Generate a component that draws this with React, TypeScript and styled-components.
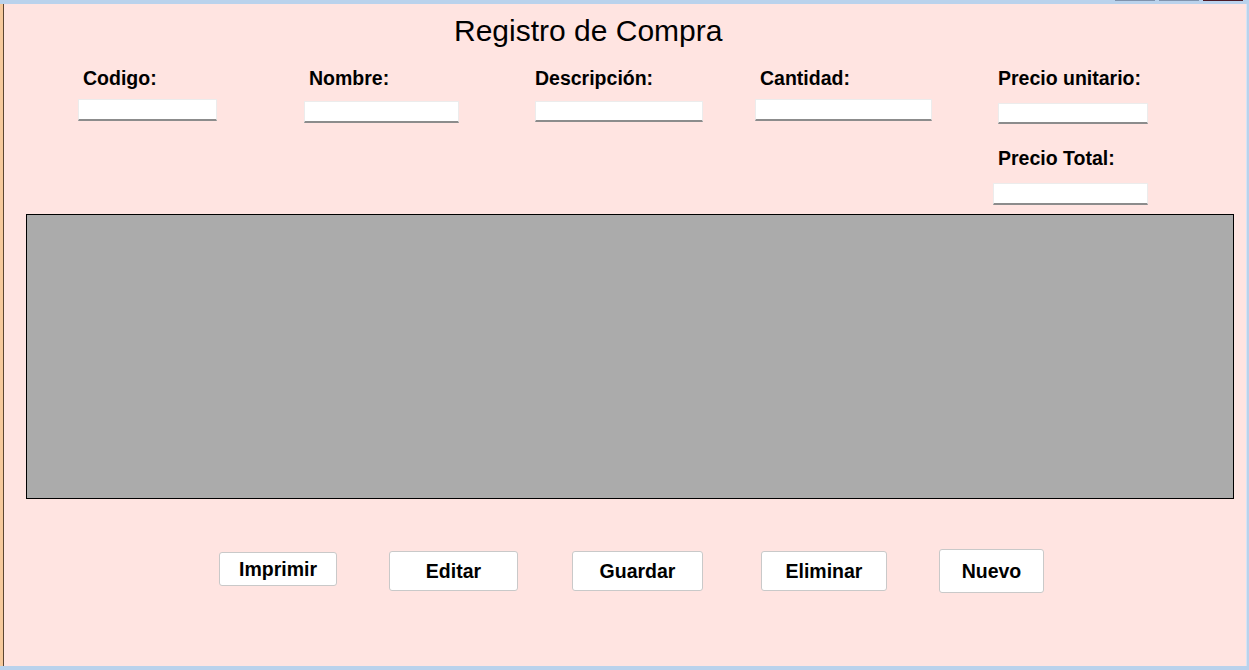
import React from "react";
import styled, { createGlobalStyle } from "styled-components";

const Global = createGlobalStyle`
  html, body { margin: 0; padding: 0; background: #ffe4e1; }
  body { font-family: "Liberation Sans", Arial, sans-serif; }
  * { box-sizing: border-box; }
`;

const Window = styled.div`
  width: 1249px;
  height: 670px;
  display: flex;
  flex-direction: column;
  overflow: hidden;
`;

const TopBar = styled.div`
  height: 4px;
  background: #bad2ec;
  display: flex;
  justify-content: flex-end;
  padding-right: 6px;
  gap: 4px;
`;

const CaptionButton = styled.div<{ $tone: string }>`
  width: 40px;
  height: 1px;
  background: ${(p) => p.$tone};
`;

const Middle = styled.div`
  flex: 1;
  display: flex;
  min-height: 0;
`;

const LeftEdge = styled.div`
  width: 4px;
  background: #f6c99c;
  border-right: 1px solid #5c4632;
`;

const RightEdge = styled.div`
  width: 3px;
  background: #bad2ec;
  border-left: 1px solid #d6e5f5;
`;

const BottomBar = styled.div`
  height: 4px;
  background: #bad2ec;
`;

const Content = styled.div`
  flex: 1;
  background: #ffe4e1;
  display: flex;
  flex-direction: column;
  color: #000;
`;

const Title = styled.h1`
  margin: 0;
  padding: 10px 0 0 450px;
  font-size: 30px;
  line-height: 34px;
  font-weight: normal;
`;

const Fields = styled.div`
  margin-top: 19px;
  padding-left: 74px;
  display: grid;
  grid-template-columns: 226px 231px 220px 238px 1fr;
  align-items: start;
`;

const Field = styled.div`
  display: flex;
  flex-direction: column;
  align-items: flex-start;
`;

const Label = styled.label<{ $dx?: number; $mt?: number }>`
  display: block;
  font-size: 19.5px;
  line-height: 22px;
  font-weight: bold;
  margin-left: ${(p) => p.$dx ?? 0}px;
  margin-top: ${(p) => p.$mt ?? 0}px;
  white-space: nowrap;
`;

const TextBox = styled.input<{ $w: number; $mt: number; $dx?: number; $h?: number }>`
  display: block;
  width: ${(p) => p.$w}px;
  height: ${(p) => p.$h ?? 22}px;
  margin: ${(p) => p.$mt}px 0 0 ${(p) => p.$dx ?? 0}px;
  padding: 0 3px;
  background: #fff;
  border: 1px solid #ececec;
  border-bottom: 2px solid #8c8c8c;
  font-family: inherit;
  font-size: 14px;
  outline: none;
`;

const DataGrid = styled.div`
  margin: 9px 0 0 22px;
  width: 1208px;
  height: 285px;
  background: #ababab;
  border: 1px solid #000;
`;

const Buttons = styled.div`
  margin-top: 50px;
  padding-left: 215px;
  display: flex;
  align-items: flex-start;
`;

const Button = styled.button<{ $w: number; $h: number; $ml: number; $mt: number }>`
  width: ${(p) => p.$w}px;
  height: ${(p) => p.$h}px;
  margin: ${(p) => p.$mt}px 0 0 ${(p) => p.$ml}px;
  background: #fff;
  border: 1px solid #c9c9c9;
  border-radius: 3px;
  font-family: inherit;
  font-size: 19.5px;
  font-weight: bold;
  color: #000;
  padding: 0;
  cursor: pointer;
`;

export default function App() {
  return (
    <>
      <Global />
      <Window>
        <TopBar>
          <CaptionButton $tone="#8093ad" />
          <CaptionButton $tone="#8093ad" />
          <CaptionButton $tone="#4d1a26" />
        </TopBar>
        <Middle>
          <LeftEdge />
          <Content>
            <Title>Registro de Compra</Title>
            <Fields>
              <Field>
                <Label $dx={5}>Codigo:</Label>
                <TextBox $w={139} $mt={10} />
              </Field>
              <Field>
                <Label $dx={5}>Nombre:</Label>
                <TextBox $w={155} $mt={12} />
              </Field>
              <Field>
                <Label>Descripción:</Label>
                <TextBox $w={168} $mt={12} $h={21} />
              </Field>
              <Field>
                <Label $dx={5}>Cantidad:</Label>
                <TextBox $w={177} $mt={10} />
              </Field>
              <Field>
                <Label $dx={5}>Precio unitario:</Label>
                <TextBox $w={150} $mt={14} $dx={5} $h={21} />
                <Label $dx={5} $mt={23}>Precio Total:</Label>
                <TextBox $w={155} $mt={14} $h={22} />
              </Field>
            </Fields>
            <DataGrid />
            <Buttons>
              <Button $w={118} $h={34} $ml={0} $mt={3}>Imprimir</Button>
              <Button $w={129} $h={40} $ml={52} $mt={2}>Editar</Button>
              <Button $w={131} $h={40} $ml={54} $mt={2}>Guardar</Button>
              <Button $w={126} $h={40} $ml={58} $mt={2}>Eliminar</Button>
              <Button $w={105} $h={44} $ml={52} $mt={0}>Nuevo</Button>
            </Buttons>
          </Content>
          <RightEdge />
        </Middle>
        <BottomBar />
      </Window>
    </>
  );
}
